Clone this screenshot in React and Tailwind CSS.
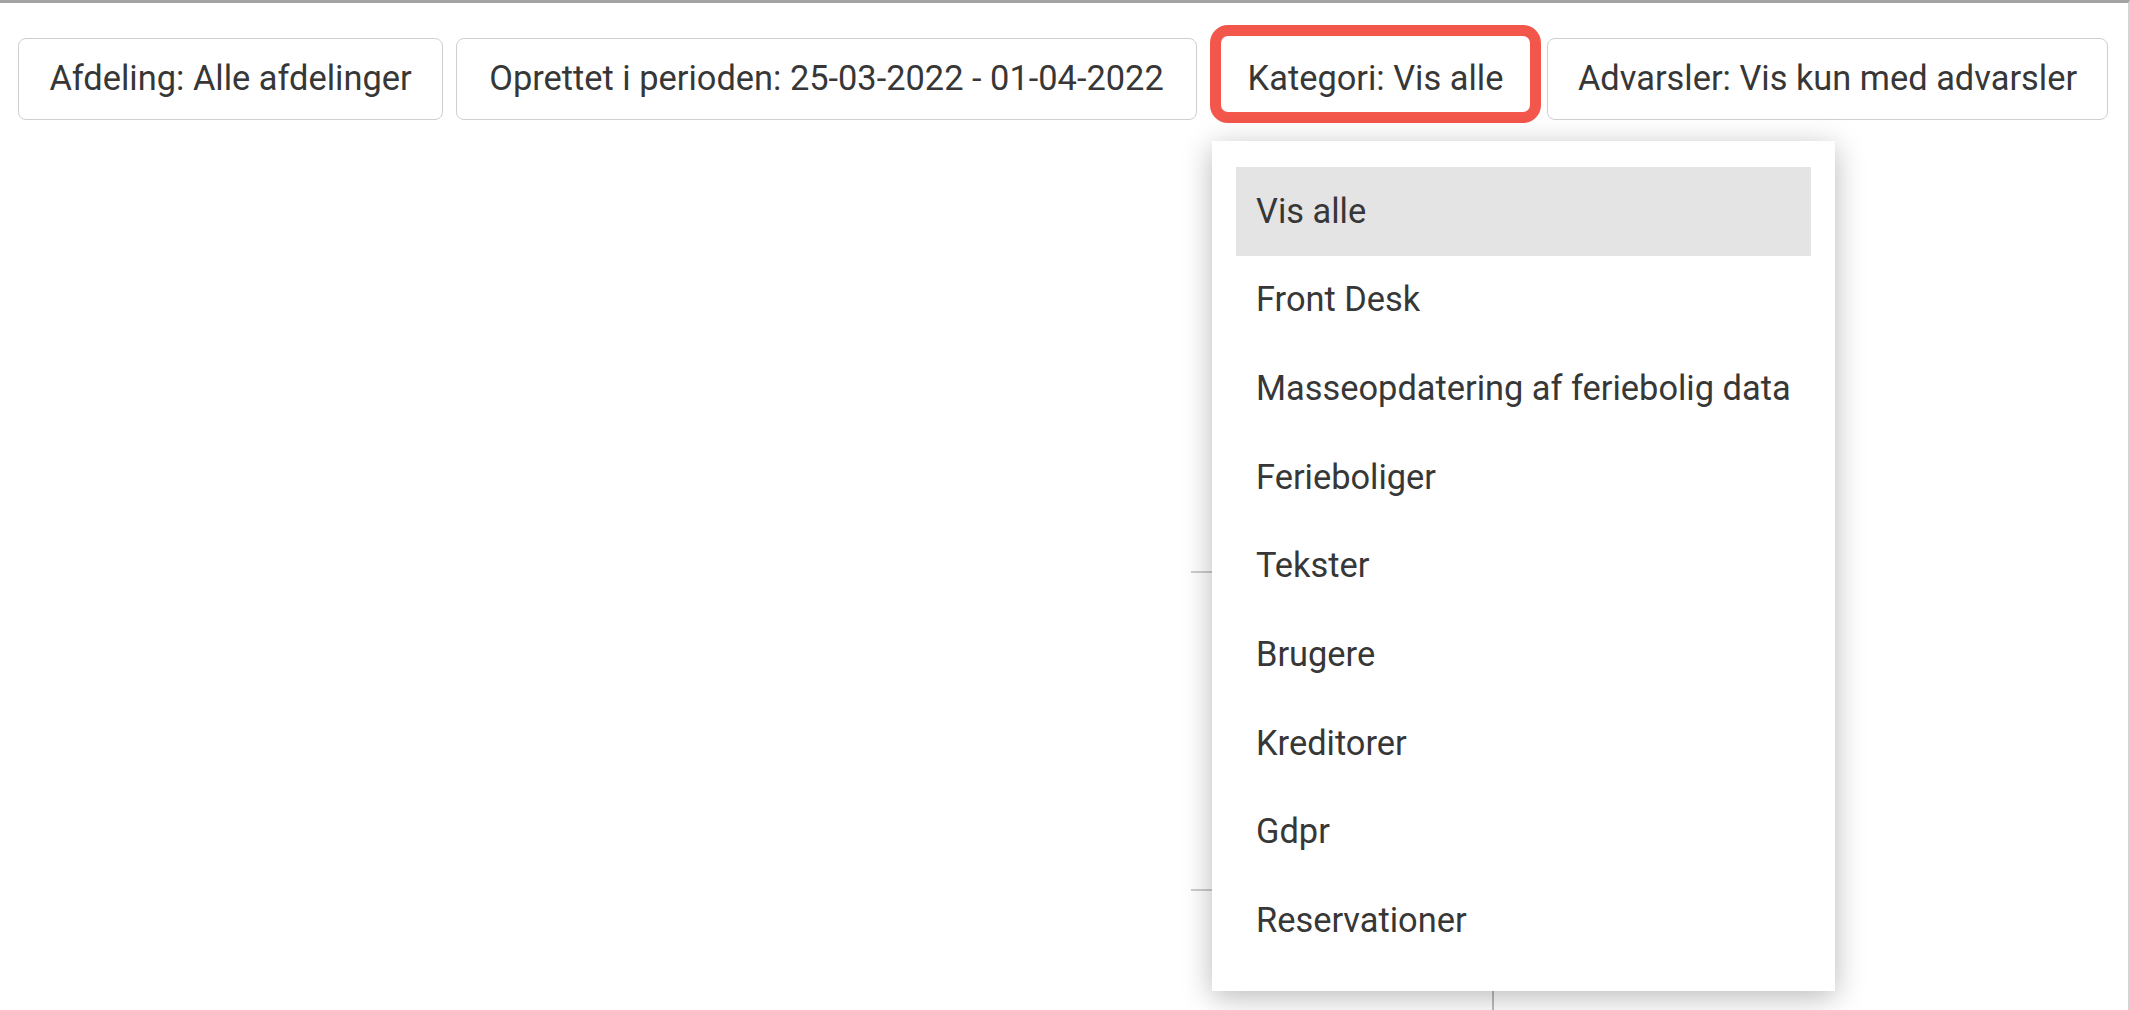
const filters = [
  { label: "Afdeling: Alle afdelinger", width: "w-[425px]" },
  { label: "Oprettet i perioden: 25-03-2022 - 01-04-2022", width: "w-[741px]" },
];

const categories = [
  "Vis alle",
  "Front Desk",
  "Masseopdatering af feriebolig data",
  "Ferieboliger",
  "Tekster",
  "Brugere",
  "Kreditorer",
  "Gdpr",
  "Reservationer",
];

function FilterButton({ label, width }) {
  return (
    <button
      type="button"
      className={`${width} flex h-[82px] shrink-0 items-center justify-center rounded-[8px] border-[1.5px] border-[#cfcfcf] bg-white text-[34.4px] text-[#373737]`}
    >
      {label}
    </button>
  );
}

export default function App() {
  const selected = "Vis alle";

  return (
    <main className="relative h-[1010px] w-[2130px] overflow-hidden border-t-[3px] border-r-[2px] border-t-[#a3a3a3] border-r-[#d4d4d4] bg-white font-['Roboto',sans-serif]">
      {/* table lines peeking out behind the open menu */}
      <div className="pointer-events-none absolute left-[1191px] top-[568px] h-[442px] w-[640px]" aria-hidden="true">
        <div className="h-[2px] w-full bg-[#cdcdcd]" />
        <div className="mt-[316px] h-[2px] w-full bg-[#cdcdcd]" />
        <div className="ml-[301px] h-[122px] w-[2px] bg-[#bdbdbd]" />
      </div>

      <div className="relative flex items-start gap-[13px] pl-[18px] pt-[35px]">
        {filters.map((f) => (
          <FilterButton key={f.label} {...f} />
        ))}

        <div className="-mt-[13px] -mr-[7px] flex h-[98px] w-[331px] shrink-0 items-center justify-center rounded-[18px] border-[11px] border-[#f3564a] bg-white pt-[10px] text-[34.4px] text-[#373737]">
          Kategori: Vis alle
        </div>

        <FilterButton label="Advarsler: Vis kun med advarsler" width="w-[561px]" />
      </div>

      <ul className="absolute left-[1212px] top-[138px] w-[623px] bg-white px-[24px] py-[26px] shadow-[0_6px_28px_rgba(0,0,0,0.28)]">
        {categories.map((c) => (
          <li
            key={c}
            className={`flex h-[88.7px] items-center pl-[20px] text-[34.4px] text-[#373737] ${c === selected ? "bg-[#e4e4e4]" : ""}`}
          >
            {c}
          </li>
        ))}
      </ul>
    </main>
  );
}
